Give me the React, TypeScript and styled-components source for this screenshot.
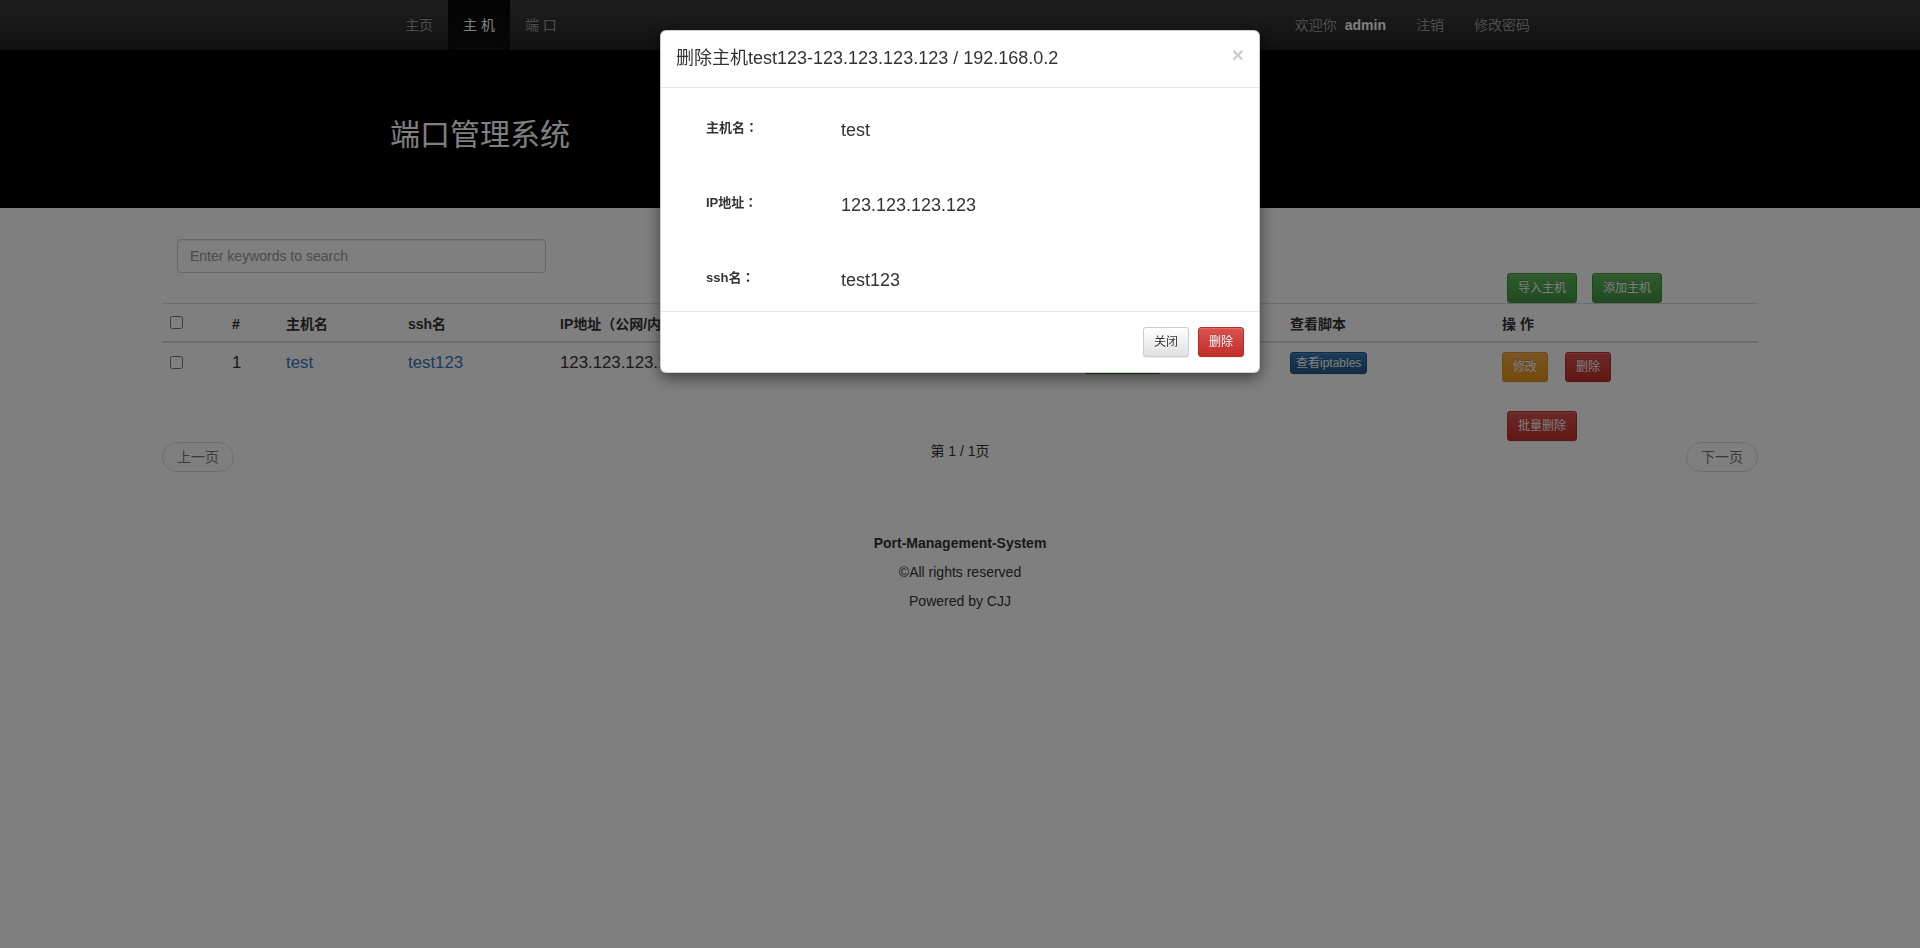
import React from "react";
import styled, { createGlobalStyle, css } from "styled-components";

const FONT = `"Liberation Sans", "Noto Sans CJK SC", sans-serif`;

const GlobalStyle = createGlobalStyle`
  html, body { margin: 0; padding: 0; background: #fff; }
  body {
    font-family: ${FONT};
    font-size: 14px;
    line-height: 1.42857143;
    color: #333;
  }
  * { box-sizing: border-box; }
`;

/* ---------- navbar ---------- */
const Navbar = styled.nav`
  height: 50px;
  background: linear-gradient(to bottom, #3c3c3c 0%, #222 100%);
`;
const NavContainer = styled.div`
  width: 1170px;
  height: 50px;
  margin: 0 auto;
  padding-left: 15px;
  display: flex;
  justify-content: space-between;
`;
const NavList = styled.ul`
  display: flex;
  list-style: none;
  margin: 0;
  padding: 0;
`;
const NavItem = styled.li<{ $active?: boolean }>`
  padding: 15px;
  line-height: 20px;
  font-size: 14px;
  white-space: pre;
  color: ${(p) => (p.$active ? "#fff" : "#9d9d9d")};
  text-shadow: 0 -1px 0 rgba(0, 0, 0, 0.25);
  ${(p) =>
    p.$active &&
    css`
      background: linear-gradient(to bottom, #080808 0%, #0f0f0f 100%);
      box-shadow: inset 0 3px 9px rgba(0, 0, 0, 0.25);
    `}
`;
const UserName = styled.b`
  color: #fff;
  margin-left: 8px;
`;

/* ---------- jumbotron ---------- */
const Jumbotron = styled.header`
  background: #000;
  height: 158px;
  padding-top: 68px;
`;
const JumboInner = styled.div`
  width: 1170px;
  margin: 0 auto;
  padding: 0 15px;
`;
const Title = styled.h1`
  margin: 0;
  font-size: 30px;
  line-height: 33px;
  font-weight: 400;
  color: #fff;
`;

/* ---------- main ---------- */
const Main = styled.main`
  width: 1596px;
  margin: 0 auto;
`;
const TopRow = styled.div`
  display: grid;
  grid-template-columns: 399px 1fr 266px;
  margin-top: 31px;
`;
const SearchCell = styled.div`
  padding: 0 15px;
`;
const SearchInput = styled.input`
  display: block;
  width: 100%;
  height: 34px;
  padding: 6px 12px;
  font-family: ${FONT};
  font-size: 14px;
  line-height: 20px;
  color: #555;
  background: #fff;
  border: 1px solid #ccc;
  border-radius: 4px;
  box-shadow: inset 0 1px 1px rgba(0, 0, 0, 0.075);
  outline: none;
  &::placeholder {
    color: #999;
  }
`;
const ActionCell = styled.div<{ $col: number; $padTop?: number }>`
  grid-column: ${(p) => p.$col};
  padding: ${(p) => p.$padTop ?? 0}px 15px 0;
  display: flex;
  gap: 15px;
`;

const Table = styled.table`
  width: 100%;
  table-layout: fixed;
  border-collapse: separate;
  border-spacing: 0;
`;
const Col = styled.col<{ $w: number }>`
  width: ${(p) => p.$w}px;
`;
const Th = styled.th`
  text-align: left;
  padding: 10px 8px 7px;
  border-top: 1px solid #ddd;
  border-bottom: 2px solid #ddd;
  font-size: 14px;
  font-weight: 700;
  line-height: 20px;
  vertical-align: top;
  white-space: pre;
  overflow: hidden;
`;
const Td = styled.td`
  padding: 8px;
  font-size: 16.8px;
  line-height: 24px;
  vertical-align: top;
  white-space: nowrap;
  overflow: hidden;
`;
const CheckBox = styled.input<{ $mt: number }>`
  display: block;
  width: 13px;
  height: 13px;
  margin: ${(p) => p.$mt}px 0 0;
`;
const Link = styled.a`
  color: #337ab7;
  text-decoration: none;
`;
const CellActions = styled.div`
  display: flex;
  gap: 17px;
  padding-top: 1px;
`;
const CellButton = styled.div`
  padding-top: 1px;
  line-height: 0;
`;

const BatchRow = styled.div`
  display: grid;
  grid-template-columns: 1330px 266px;
  margin-top: 21px;
`;

const Pager = styled.div`
  display: grid;
  grid-template-columns: 1fr auto 1fr;
  align-items: start;
  margin-top: 1px;
`;
const PagerLink = styled.a<{ $side: "left" | "right" }>`
  justify-self: ${(p) => (p.$side === "left" ? "start" : "end")};
  display: inline-block;
  padding: 4px 14px;
  line-height: 20px;
  font-size: 14px;
  color: #777;
  background: #fff;
  border: 1px solid #ddd;
  border-radius: 15px;
  text-decoration: none;
`;
const PageInfo = styled.span`
  line-height: 20px;
  margin-top: -1px;
  font-size: 14px;
  color: #333;
`;

/* ---------- footer ---------- */
const Footer = styled.footer`
  margin-top: 61px;
  text-align: center;
  display: flex;
  flex-direction: column;
  gap: 9px;
`;
const FooterLine = styled.div<{ $bold?: boolean }>`
  line-height: 20px;
  font-size: 14px;
  font-weight: ${(p) => (p.$bold ? 700 : 400)};
  color: #333;
`;

/* ---------- buttons ---------- */
type Variant = "default" | "primary" | "success" | "warning" | "danger";
const variants: Record<Variant, ReturnType<typeof css>> = {
  default: css`
    color: #333;
    background-image: linear-gradient(to bottom, #fff 0%, #e0e0e0 100%);
    border-color: #ccc;
    text-shadow: 0 1px 0 #fff;
  `,
  primary: css`
    background-image: linear-gradient(to bottom, #337ab7 0%, #265a88 100%);
    border-color: #245580;
  `,
  success: css`
    background-image: linear-gradient(to bottom, #5cb85c 0%, #419641 100%);
    border-color: #3e8f3e;
  `,
  warning: css`
    background-image: linear-gradient(to bottom, #f0ad4e 0%, #eb9316 100%);
    border-color: #e38d13;
  `,
  danger: css`
    background-image: linear-gradient(to bottom, #d9534f 0%, #c12e2a 100%);
    border-color: #b92c28;
  `,
};
const Btn = styled.button<{ $variant: Variant; $size?: "sm" | "xs" }>`
  display: inline-block;
  font-family: ${FONT};
  font-size: 12px;
  line-height: 18px;
  border: 1px solid transparent;
  border-radius: 3px;
  color: #fff;
  white-space: nowrap;
  cursor: pointer;
  padding: ${(p) => (p.$size === "xs" ? "1px 5px" : "5px 10px")};
  text-shadow: 0 -1px 0 rgba(0, 0, 0, 0.2);
  box-shadow: inset 0 1px 0 rgba(255, 255, 255, 0.15),
    0 1px 1px rgba(0, 0, 0, 0.075);
  ${(p) => variants[p.$variant]}
`;

/* ---------- modal ---------- */
const Backdrop = styled.div`
  position: fixed;
  inset: 0;
  background: rgba(0, 0, 0, 0.5);
  z-index: 1040;
`;
const ModalDialog = styled.div`
  position: fixed;
  top: 30px;
  left: 50%;
  width: 600px;
  margin-left: -300px;
  z-index: 1050;
  background: #fff;
  border: 1px solid rgba(0, 0, 0, 0.2);
  border-radius: 6px;
  box-shadow: 0 5px 15px rgba(0, 0, 0, 0.5);
`;
const ModalHeader = styled.div`
  display: flex;
  justify-content: space-between;
  align-items: flex-start;
  padding: 15px;
  border-bottom: 1px solid #e5e5e5;
`;
const ModalTitle = styled.h4`
  margin: 0;
  font-size: 18px;
  font-weight: 400;
  line-height: 1.42857143;
  color: #333;
`;
const CloseButton = styled.button`
  margin-top: -2px;
  padding: 0;
  border: 0;
  background: none;
  font-family: ${FONT};
  font-size: 21px;
  font-weight: 700;
  line-height: 1;
  color: #000;
  opacity: 0.2;
  text-shadow: 0 1px 0 #fff;
  cursor: pointer;
`;
const ModalBody = styled.div`
  padding: 29px 15px 18px;
  display: flex;
  flex-direction: column;
  gap: 49px;
`;
const InfoRow = styled.div`
  display: flex;
  align-items: flex-start;
  height: 26px;
  padding-left: 30px;
`;
const InfoLabel = styled.span`
  width: 135px;
  font-size: 13px;
  font-weight: 700;
  line-height: 20px;
  color: #333;
`;
const Colon = styled.span`
  font-family: "Noto Sans CJK TC", "Noto Sans CJK SC", sans-serif;
`;
const InfoValue = styled.span`
  font-size: 18px;
  line-height: 26px;
  color: #333;
`;
const ModalFooter = styled.div`
  display: flex;
  justify-content: flex-end;
  gap: 9px;
  padding: 15px;
  border-top: 1px solid #e5e5e5;
`;

const info = [
  { label: "主机名", value: "test" },
  { label: "IP地址", value: "123.123.123.123" },
  { label: "ssh名", value: "test123" },
];

export default function App() {
  return (
    <>
      <GlobalStyle />
      <Navbar>
        <NavContainer>
          <NavList>
            <NavItem>主页</NavItem>
            <NavItem $active>主 机</NavItem>
            <NavItem>端 口</NavItem>
          </NavList>
          <NavList>
            <NavItem>
              欢迎你<UserName>admin</UserName>
            </NavItem>
            <NavItem>注销</NavItem>
            <NavItem>修改密码</NavItem>
          </NavList>
        </NavContainer>
      </Navbar>

      <Jumbotron>
        <JumboInner>
          <Title>端口管理系统</Title>
        </JumboInner>
      </Jumbotron>

      <Main>
        <TopRow>
          <SearchCell>
            <SearchInput placeholder="Enter keywords to search" />
          </SearchCell>
          <ActionCell $col={3} $padTop={34}>
            <Btn $variant="success" $size="sm">导入主机</Btn>
            <Btn $variant="success" $size="sm">添加主机</Btn>
          </ActionCell>
        </TopRow>

        <Table>
          <colgroup>
            <Col $w={62} />
            <Col $w={54} />
            <Col $w={122} />
            <Col $w={152} />
            <Col $w={524} />
            <Col $w={206} />
            <Col $w={212} />
            <Col $w={264} />
          </colgroup>
          <thead>
            <tr>
              <Th>
                <CheckBox type="checkbox" $mt={2} />
              </Th>
              <Th>#</Th>
              <Th>主机名</Th>
              <Th>ssh名</Th>
              <Th>IP地址（公网/内网）</Th>
              <Th>开放端口</Th>
              <Th>查看脚本</Th>
              <Th>操 作</Th>
            </tr>
          </thead>
          <tbody>
            <tr>
              <Td>
                <CheckBox type="checkbox" $mt={5} />
              </Td>
              <Td>1</Td>
              <Td>
                <Link href="#">test</Link>
              </Td>
              <Td>
                <Link href="#">test123</Link>
              </Td>
              <Td>123.123.123.123 / 192.168.0.2</Td>
              <Td>
                <CellButton>
                  <Btn $variant="success" $size="xs">查看端口 (1)</Btn>
                </CellButton>
              </Td>
              <Td>
                <CellButton>
                  <Btn $variant="primary" $size="xs">查看iptables</Btn>
                </CellButton>
              </Td>
              <Td>
                <CellActions>
                  <Btn $variant="warning" $size="sm">修改</Btn>
                  <Btn $variant="danger" $size="sm">删除</Btn>
                </CellActions>
              </Td>
            </tr>
          </tbody>
        </Table>

        <BatchRow>
          <ActionCell $col={2}>
            <Btn $variant="danger" $size="sm">批量删除</Btn>
          </ActionCell>
        </BatchRow>

        <Pager>
          <PagerLink $side="left" href="#">上一页</PagerLink>
          <PageInfo>第 1 / 1页</PageInfo>
          <PagerLink $side="right" href="#">下一页</PagerLink>
        </Pager>
      </Main>

      <Footer>
        <FooterLine $bold>Port-Management-System</FooterLine>
        <FooterLine>©All rights reserved</FooterLine>
        <FooterLine>Powered by CJJ</FooterLine>
      </Footer>

      <Backdrop />
      <ModalDialog role="dialog">
        <ModalHeader>
          <ModalTitle>删除主机test123-123.123.123.123 / 192.168.0.2</ModalTitle>
          <CloseButton aria-label="Close">×</CloseButton>
        </ModalHeader>
        <ModalBody>
          {info.map((row) => (
            <InfoRow key={row.label}>
              <InfoLabel>
                {row.label}
                <Colon>：</Colon>
              </InfoLabel>
              <InfoValue>{row.value}</InfoValue>
            </InfoRow>
          ))}
        </ModalBody>
        <ModalFooter>
          <Btn $variant="default" $size="sm">关闭</Btn>
          <Btn $variant="danger" $size="sm">删除</Btn>
        </ModalFooter>
      </ModalDialog>
    </>
  );
}
